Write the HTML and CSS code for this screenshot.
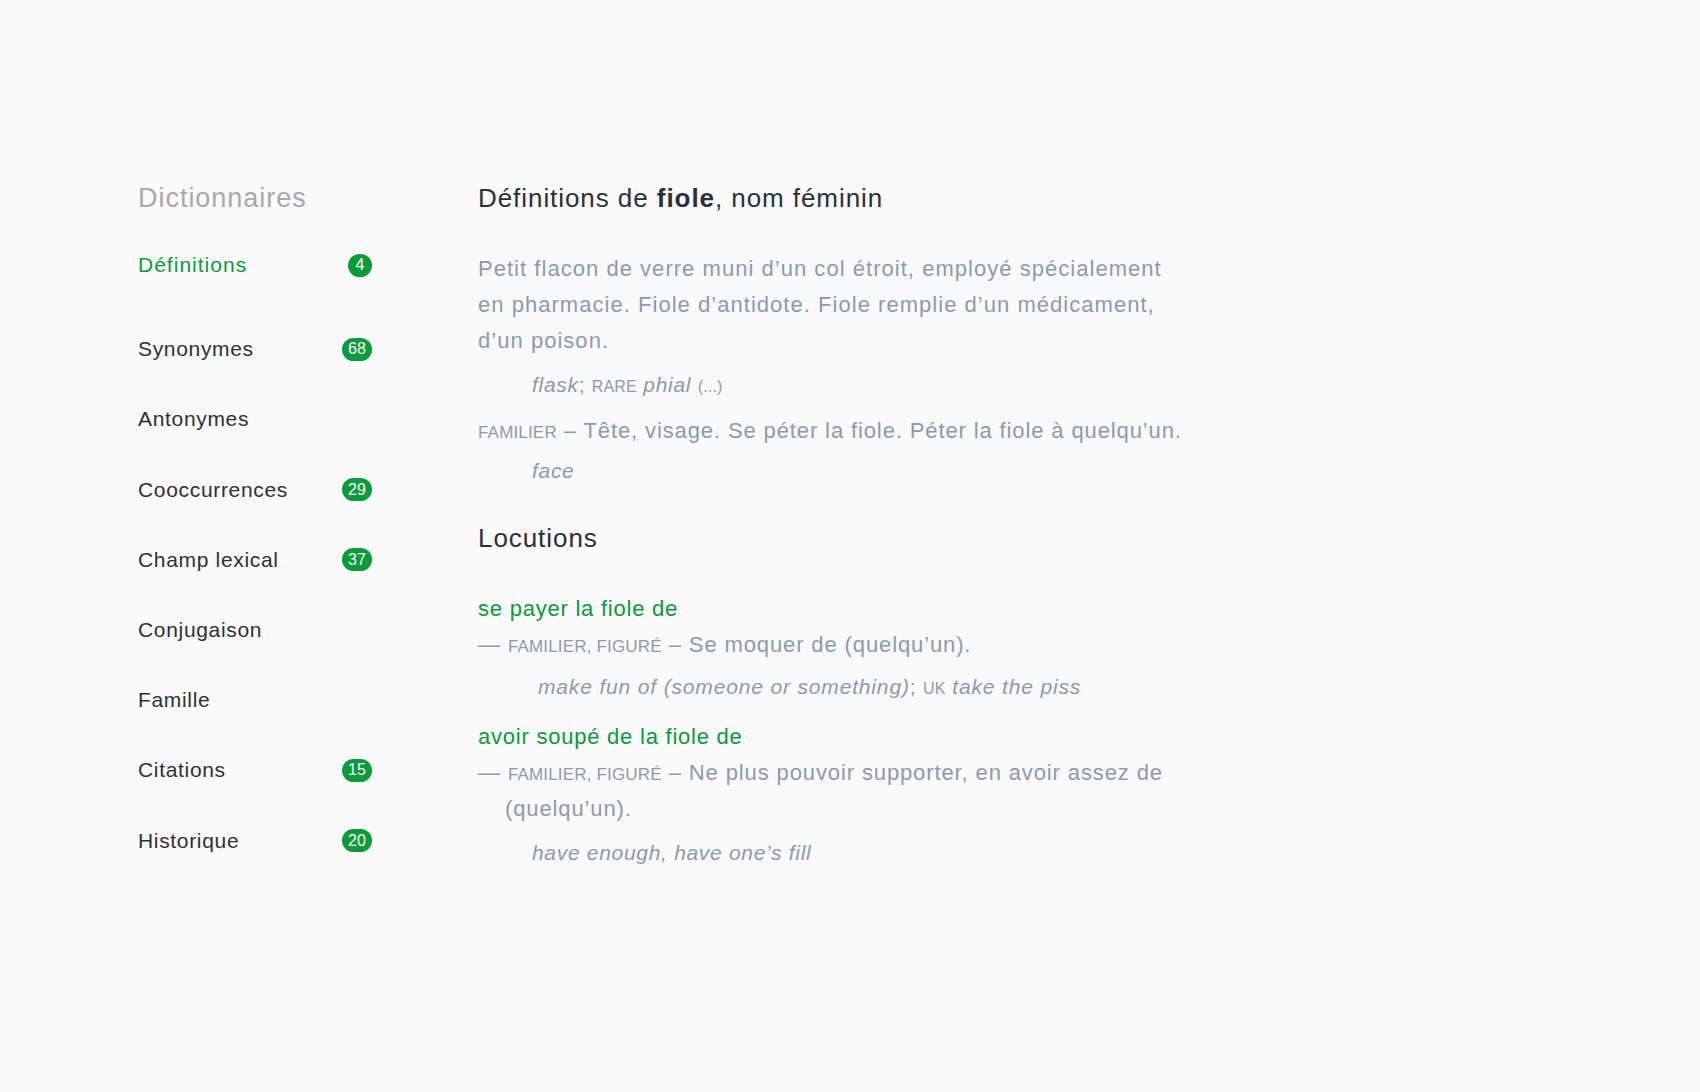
FILE: index.html
```html
<!DOCTYPE html>
<html lang="fr">
<head>
<meta charset="utf-8">
<title>fiole – Dictionnaires</title>
<link rel="stylesheet" href="styles.css">
</head>
<body>
<div class="page">
  <nav class="sidebar">
    <div class="sidebar-title">Dictionnaires</div>
    <ul class="nav">
      <li class="nav-item active first"><span>Définitions</span><span class="badge round">4</span></li>
      <li class="nav-item"><span>Synonymes</span><span class="badge">68</span></li>
      <li class="nav-item"><span>Antonymes</span></li>
      <li class="nav-item"><span>Cooccurrences</span><span class="badge">29</span></li>
      <li class="nav-item"><span>Champ lexical</span><span class="badge">37</span></li>
      <li class="nav-item"><span>Conjugaison</span></li>
      <li class="nav-item"><span>Famille</span></li>
      <li class="nav-item"><span>Citations</span><span class="badge">15</span></li>
      <li class="nav-item"><span>Historique</span><span class="badge">20</span></li>
    </ul>
  </nav>
  <main class="content">
    <h1 class="heading">Définitions de <b>fiole</b>, nom féminin</h1>
    <p class="def first-def">Petit flacon de verre muni d’un col étroit, employé spécialement en pharmacie. Fiole d’antidote. Fiole remplie d’un médicament, d’un poison.</p>
    <p class="tr tr-first"><i>flask</i>; <span class="label-sm">RARE</span> <i>phial</i> <span class="more">(...)</span></p>
    <p class="def def-next"><span class="label">FAMILIER</span> – Tête, visage. Se péter la fiole. Péter la fiole à quelqu’un.</p>
    <p class="tr tr-face"><i>face</i></p>

    <h2 class="heading section">Locutions</h2>

    <p class="loc">se payer la fiole de</p>
    <p class="def hang">— <span class="label">FAMILIER, FIGURÉ</span> – Se moquer de (quelqu’un).</p>
    <p class="tr tr-wide"><i>make fun of (someone or something)</i>; <span class="label-sm">UK</span> <i>take the piss</i></p>

    <p class="loc loc-next">avoir soupé de la fiole de</p>
    <p class="def hang">— <span class="label">FAMILIER, FIGURÉ</span> – Ne plus pouvoir supporter, en avoir assez de (quelqu’un).</p>
    <p class="tr tr-last"><i>have enough, have one’s fill</i></p>
  </main>
</div>
</body>
</html>
```

FILE: styles.css
```css
* { box-sizing: border-box; }

html, body {
  margin: 0;
  padding: 0;
  background: #fafafa;
}

body {
  font-family: "Liberation Sans", Arial, Helvetica, sans-serif;
  color: #2c3038;
}

.page {
  display: flex;
  padding: 181px 0 0 138px;
}

/* Sidebar */
.sidebar {
  width: 234px;
  flex: none;
}

.sidebar-title {
  font-size: 27px;
  line-height: 34px;
  letter-spacing: 0.036em;
  color: #a9a9a9;
  margin-bottom: 15px;
}

.nav {
  list-style: none;
  margin: 0;
  padding: 0;
}

.nav-item {
  height: 70.2px;
  display: flex;
  align-items: center;
  justify-content: space-between;
  font-size: 21px;
  letter-spacing: 0.032em;
  color: #2c3038;
}

.nav-item.first {
  margin-bottom: 14px;
}

.nav-item.active {
  color: #0a9b3b;
  letter-spacing: 0.048em;
}

.badge {
  display: inline-flex;
  align-items: center;
  justify-content: center;
  height: 23px;
  min-width: 30px;
  padding: 0 5px;
  border-radius: 12px;
  background: #0a9b3b;
  color: #ffffff;
  font-size: 16px;
  letter-spacing: 0;
}

.badge.round {
  min-width: 24px;
  width: 24px;
  padding: 0;
}

/* Content */
.content {
  margin-left: 106px;
  width: 704px;
}

.heading {
  margin: 0;
  font-size: 26px;
  line-height: 34px;
  font-weight: normal;
  letter-spacing: 0.036em;
  color: #2c3038;
}

.heading b {
  font-weight: bold;
}

.section {
  margin-top: 35px;
}

.def {
  margin: 0;
  font-size: 22px;
  line-height: 36px;
  letter-spacing: 0.04em;
  color: #8a9ab3;
}

.first-def {
  margin-top: 36px;
  letter-spacing: 0.047em;
}

.def-next {
  margin-top: 13px;
}

.label,
.label-sm,
.more {
  line-height: 1;
  letter-spacing: 0.01em;
  font-style: normal;
}

.label {
  font-size: 17px;
}

.label-sm,
.more {
  font-size: 16px;
}

.hang {
  padding-left: 27px;
  text-indent: -27px;
}

.loc + .def {
  margin-top: 3px;
}

.tr {
  margin: 11px 0 0 0;
  padding-left: 54px;
  font-size: 21px;
  line-height: 30px;
  letter-spacing: 0.033em;
  color: #8a9ab3;
}

.tr-face {
  margin-top: 7px;
}

.tr-wide {
  padding-left: 60px;
  margin-top: 9px;
  letter-spacing: 0.04em;
}

.loc {
  margin: 39px 0 0 0;
  font-size: 22px;
  line-height: 30px;
  letter-spacing: 0.035em;
  color: #0a9b3b;
}

.loc-next {
  margin-top: 20px;
}

.hang + .tr-last {
  margin-top: 11px;
}
```
